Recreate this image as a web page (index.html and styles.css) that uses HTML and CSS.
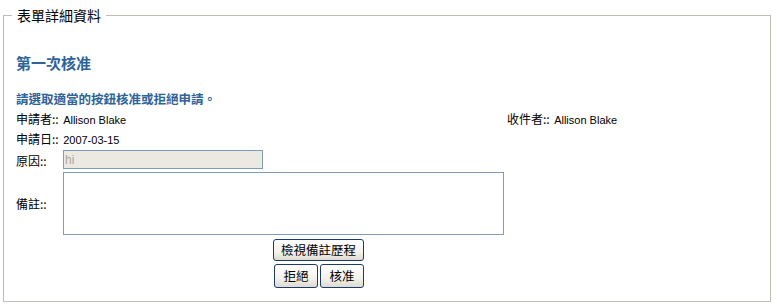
FILE: index.html
```html
<!DOCTYPE html>
<html lang="zh-Hant">
<head>
    <meta charset="UTF-8">
    <title>表單詳細資料</title>
    <link rel="stylesheet" href="styles.css">
</head>
<body>
    <fieldset class="form-box">
        <legend>表單詳細資料</legend>

        <h3 class="step-title">第一次核准</h3>
        <p class="hint">請選取適當的按鈕核准或拒絕申請。</p>

        <div class="info-row">
            <div class="info-left"><span class="lbl">申請者::</span> <span class="val">Allison Blake</span></div>
            <div><span class="lbl">收件者::</span> <span class="val">Allison Blake</span></div>
        </div>
        <div class="info-row">
            <div class="info-left"><span class="lbl">申請日::</span> <span class="val">2007-03-15</span></div>
        </div>

        <div class="field-row">
            <label class="lbl">原因::</label>
            <input type="text" class="reason" value="hi" disabled>
        </div>
        <div class="field-row">
            <label class="lbl">備註::</label>
            <textarea class="notes"></textarea>
        </div>

        <div class="btn-row first">
            <button class="btn wide">檢視備註歷程</button>
        </div>
        <div class="btn-row second">
            <button class="btn tall">拒絕</button>
            <button class="btn tall">核准</button>
        </div>
    </fieldset>
</body>
</html>
```
FILE: styles.css
```css
body {
    margin: 0;
    background-color: #fff;
    font-family: "Liberation Sans", "Noto Sans CJK TC", sans-serif;
    color: #000;
}
.form-box {
    margin: 7px 6px 3px 3px;
    padding: 0 12px 0 12px;
    border: 1px solid #bdbdb5;
    height: 295px;
    box-sizing: border-box;
}
.form-box legend {
    font-family: "Noto Sans CJK TC", sans-serif;
    font-size: 14px;
    padding: 0 5px;
    margin-left: -4px;
    line-height: 16px;
}
.step-title {
    font-family: "Noto Sans CJK TC", sans-serif;
    font-size: 15px;
    font-weight: bold;
    color: #2e6399;
    margin: 31px 0 0 0;
    line-height: 18px;
}
.hint {
    font-family: "Noto Sans CJK TC", sans-serif;
    font-size: 12.5px;
    font-weight: bold;
    color: #2e6399;
    margin: 19px 0 2px 0;
    line-height: 16px;
}
.info-row {
    display: flex;
    height: 20px;
    align-items: center;
}
.info-left {
    width: 491px;
}
.lbl {
    font-family: "Noto Sans CJK TC", sans-serif;
    font-size: 12px;
}
.val {
    font-size: 11px;
}
.field-row {
    display: grid;
    grid-template-columns: 47px 1fr;
    align-items: center;
}
.reason {
    width: 200px;
    height: 19px;
    box-sizing: border-box;
    margin: 1px 0 3px 0;
    border: 1px solid #7f9db9;
    background-color: #ebe9e1;
    color: #aca899;
    font-family: "Liberation Sans", sans-serif;
    font-size: 12px;
    padding: 0 1px;
}
.notes {
    width: 441px;
    height: 63px;
    box-sizing: border-box;
    margin: 0;
    border: 1px solid #7f9db9;
    resize: none;
    display: block;
}
.btn-row {
    display: flex;
    gap: 2px;
}
.btn-row.first {
    padding-left: 257px;
    margin-top: 4px;
}
.btn-row.second {
    padding-left: 258px;
    margin-top: 3px;
}
.btn {
    font-family: "Noto Sans CJK TC", sans-serif;
    font-size: 12.5px;
    border: 1px solid #1c3a6b;
    border-radius: 3px;
    background: linear-gradient(#ffffff, #f3f2ec 60%, #dedbd0);
    padding: 0;
    color: #000;
    line-height: 14px;
}
.btn.wide {
    width: 91px;
    height: 22px;
}
.btn.tall {
    width: 44px;
    height: 24px;
}
```
